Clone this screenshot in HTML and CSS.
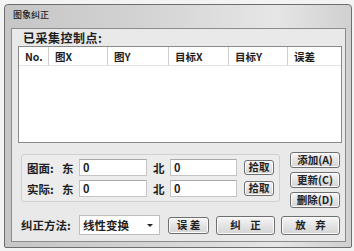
FILE: index.html
```html
<!DOCTYPE html>
<html lang="zh">
<head>
<meta charset="utf-8">
<title>图象纠正</title>
<link rel="stylesheet" href="styles.css">
</head>
<body>
<div class="window">
  <div class="titlebar">图象纠正</div>
  <div class="client">
    <div class="caption">已采集控制点:</div>
    <div class="list">
      <div class="list-head">
        <div class="col c1">No.</div>
        <div class="col c2">图X</div>
        <div class="col c3">图Y</div>
        <div class="col c4">目标X</div>
        <div class="col c5">目标Y</div>
        <div class="col c6">误差</div>
      </div>
    </div>
    <div class="middle">
      <div class="coords">
        <div class="row">
          <span class="lbl">图面:</span>
          <span class="dir">东</span>
          <div class="input w1">0</div>
          <span class="dir north">北</span>
          <div class="input w2">0</div>
          <button class="btn pick">拾取</button>
        </div>
        <div class="row">
          <span class="lbl">实际:</span>
          <span class="dir">东</span>
          <div class="input w1">0</div>
          <span class="dir north">北</span>
          <div class="input w2">0</div>
          <button class="btn pick">拾取</button>
        </div>
      </div>
      <div class="side">
        <button class="btn side-btn">添加(A)</button>
        <button class="btn side-btn">更新(C)</button>
        <button class="btn side-btn">删除(D)</button>
      </div>
    </div>
    <div class="bottom">
      <span class="method">纠正方法:</span>
      <div class="select"><span>线性变换</span><span class="arrow"></span></div>
      <button class="btn err">误 差</button>
      <button class="btn ok">纠&nbsp;&nbsp;&nbsp;&nbsp;正</button>
      <button class="btn cancel">放&nbsp;&nbsp;&nbsp;&nbsp;弃</button>
    </div>
  </div>
</div>
</body>
</html>
```

FILE: styles.css
```css
* { box-sizing: border-box; }
html, body { margin: 0; padding: 0; }
body {
  width: 354px;
  height: 251px;
  background: #f3f3f3;
  font-family: "Noto Sans CJK SC", "DejaVu Sans", sans-serif;
  color: #1e1e1e;
  overflow: hidden;
}
.window {
  margin: 4px 0 0 4px;
  width: 348px;
  height: 244px;
  border: 1px solid #6e6e6e;
  border-radius: 4px 4px 2px 2px;
  background: linear-gradient(90deg, #c6c6c6 0%, #d3d3d3 40%, #e6e6e6 78%, #d0d0d0 100%);
  padding: 0 5px 5px 6px;
  display: flex;
  flex-direction: column;
}
.titlebar {
  height: 23px;
  font-size: 9px;
  line-height: 9px;
  padding: 5px 0 0 2px;
  color: #222;
  font-weight: 500;
}
.client {
  flex: 1;
  border: 1px solid #8c8c8c;
  background: #e9e9e9;
  padding: 2px 3px 0 6px;
  display: flex;
  flex-direction: column;
}
.caption {
  height: 15px;
  margin-left: 5px;
  font-size: 12px;
  line-height: 13px;
  font-weight: 700;
  letter-spacing: 0.5px;
}
.list {
  height: 97px;
  border: 1px solid #8a8a8a;
  background: #fff;
}
.list-head {
  display: flex;
  height: 19px;
  border-bottom: 1px solid #e2e2e2;
}
.col {
  font-size: 10.5px;
  font-weight: 700;
  line-height: 19px;
  padding-left: 6px;
  border-right: 1px solid #cfcfcf;
}
.c1 { width: 30px; }
.c2 { width: 59px; }
.c3 { width: 61px; }
.c4 { width: 60px; }
.c5 { width: 59px; }
.c6 { width: 53px; border-right: none; }
.middle {
  display: flex;
  margin-top: 9px;
}
.coords {
  margin: 2px 0 0 3px;
  width: 259px;
  height: 48px;
  border: 1px solid #d0d0d0;
  border-radius: 3px;
  background: #ececec;
  padding: 4px 0 0 5px;
  display: flex;
  flex-direction: column;
  gap: 4px;
}
.row {
  display: flex;
  align-items: center;
  height: 17px;
}
.lbl {
  width: 35px;
  font-size: 11.5px;
  font-weight: 700;
}
.dir {
  width: 17px;
  font-size: 11.5px;
  font-weight: 700;
}
.north { margin-left: 6px; }
.input {
  height: 17px;
  border: 1px solid #c4c4c4;
  border-top-color: #a8a8a8;
  background: #fff;
  font-size: 11px;
  font-weight: 700;
  line-height: 15px;
  padding-left: 3px;
}
.w1 { width: 68px; }
.w2 { width: 67px; }
.btn {
  font-family: "Noto Sans CJK SC", "DejaVu Sans", sans-serif;
  font-size: 10.5px;
  font-weight: 700;
  color: #222;
  background: linear-gradient(#f6f6f6, #e4e4e4 50%, #d4d4d4);
  border: 1px solid #6f6f6f;
  border-radius: 3px;
  padding: 0;
  line-height: 1;
  box-shadow: inset 0 0 0 1px #fbfbfb;
}
.pick {
  margin-left: 7px;
  width: 30px;
  height: 15px;
}
.side {
  margin-left: 10px;
  width: 50px;
  display: flex;
  flex-direction: column;
  gap: 4px;
}
.side-btn { height: 16px; }
.bottom {
  display: flex;
  align-items: center;
  margin-top: 7px;
  height: 20px;
}
.method {
  margin-left: 3px;
  width: 58px;
  font-size: 11.5px;
  font-weight: 700;
}
.select {
  width: 81px;
  height: 20px;
  border: 1px solid #bdbdbd;
  background: #fff;
  display: flex;
  align-items: center;
  justify-content: space-between;
  padding: 0 6px 0 3px;
  font-size: 11.5px;
  font-weight: 700;
}
.arrow {
  width: 0;
  height: 0;
  border-left: 3px solid transparent;
  border-right: 3px solid transparent;
  border-top: 3px solid #222;
}
.err { margin-left: 8px; width: 41px; height: 17px; }
.ok { margin-left: 7px; width: 59px; height: 19px; }
.cancel { margin-left: 6px; width: 59px; height: 19px; }
```
